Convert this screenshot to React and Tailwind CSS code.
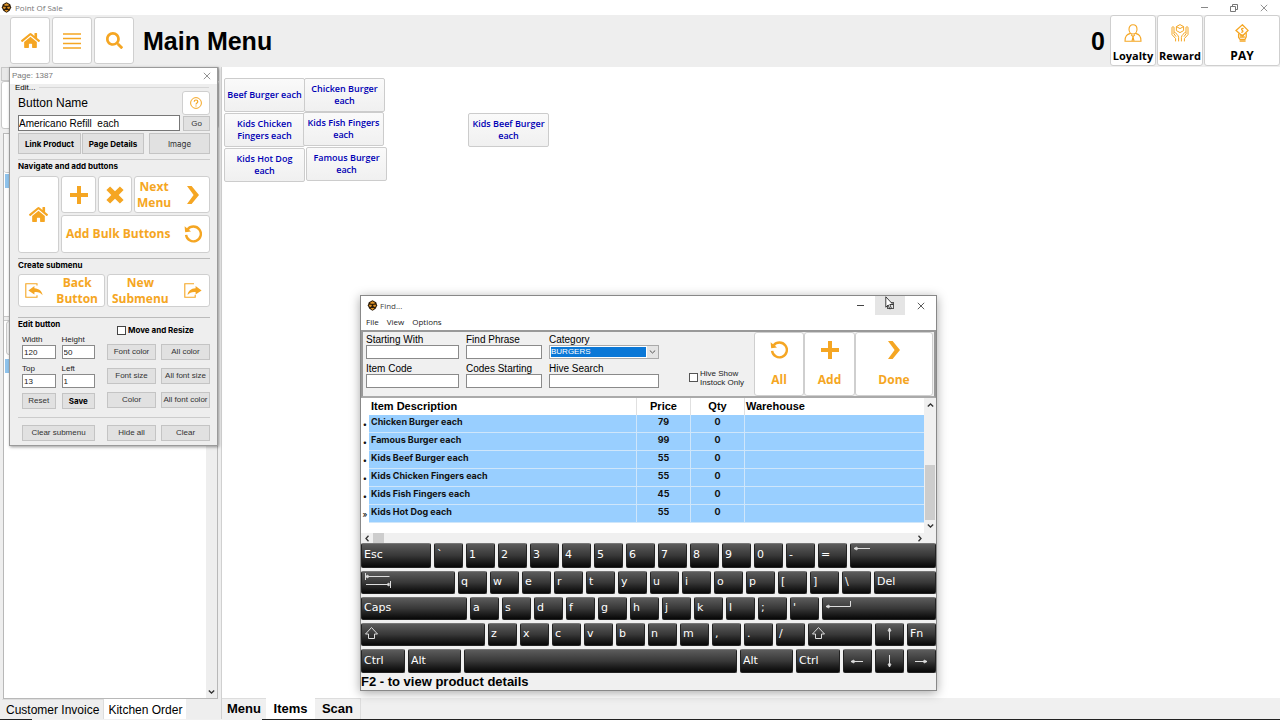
import { FaHome, FaSearch } from "react-icons/fa";

const flat = "border border-[#c4c4c4] bg-[#e1e1e1] text-[#333] text-[8px] leading-[10px] flex items-center justify-center whitespace-nowrap";
const tileBase = "border border-[#cfcfcf] rounded-[3px] bg-white text-[#f5a623] flex items-center";
const tile = `${tileBase} justify-center`;
const box = "block min-w-0 w-full h-[14px] border border-[#8a8a8a] bg-white px-px text-[8px] leading-[10px] text-[#222]";

function BeeIcon() {
  return (
    <svg viewBox="0 0 12 12" className="size-[11px] shrink-0" aria-hidden="true">
      <path d="M6 .3 10 2.4 11.2 6 9.4 9.6 6 11.8 2.6 9.6.8 6 2 2.4z" fill="#2a1a08" />
      <path d="M3 3.2 6 1.4 9 3.2 7.6 4.2H4.4zM1.8 5.2h3l.6 1.4-2.2 1.2zM10.2 5.2h-3l-.6 1.4 2.2 1.2zM3.8 8.6h4.4L6 10.8z" fill="#e0962a" />
    </svg>
  );
}

function Cross({ className }) {
  return (
    <svg viewBox="0 0 10 10" className={className} fill="none" stroke="currentColor" strokeWidth="1" aria-hidden="true">
      <path d="M1 1l8 8M9 1L1 9" />
    </svg>
  );
}

function Plus() {
  return (
    <svg viewBox="0 0 18 18" className="size-[18px]" fill="currentColor" aria-hidden="true">
      <path d="M7 0h4v7h7v4h-7v7H7v-7H0V7h7z" />
    </svg>
  );
}

function Times() {
  return (
    <svg viewBox="0 0 18 18" className="size-[18px]" fill="currentColor" aria-hidden="true">
      <path d="M4.1.4 9 5.3 13.9.4l3.7 3.7L12.7 9l4.9 4.9-3.7 3.7L9 12.7l-4.9 4.9L.4 13.9 5.3 9 .4 4.1z" />
    </svg>
  );
}

function Chevron() {
  return (
    <svg viewBox="0 0 12 18" className="h-[18px] w-[12px] shrink-0" fill="currentColor" aria-hidden="true">
      <path d="M0 0h4.6L12 9l-7.4 9H0l6.6-9z" />
    </svg>
  );
}

function Undo() {
  return (
    <svg viewBox="0 0 18 18" className="size-[18px] shrink-0" aria-hidden="true">
      <path d="M3.6 4.4A7.4 7.4 0 1 1 2.1 9.8" fill="none" stroke="currentColor" strokeWidth="2.4" />
      <path d="M.6 1.2 1.2 7.2 7 6.4z" fill="currentColor" />
    </svg>
  );
}

function PageArrow({ out }) {
  return (
    <svg viewBox="0 0 18 15" className="h-[15px] w-[18px] shrink-0" aria-hidden="true">
      {out ? (
        <>
          <path d="M10 .8H.8v13.4h10.4v-2.4" fill="none" stroke="currentColor" strokeWidth="1.1" />
          <path d="M11.6 3 17.6 7.4 11.6 11.4V9C8 8.6 5.6 9.6 3.6 12 4 8 7 5.4 11.6 5.2z" fill="currentColor" />
        </>
      ) : (
        <>
          <path d="M12 2.6V.8H.8v13.4H12v-2" fill="none" stroke="currentColor" strokeWidth="1.1" />
          <path d="M9.4 3 3.4 7.4l6 4V9.2c3.6-.4 6 .4 8.2 3C17 8.2 14 5.6 9.4 5.3z" fill="currentColor" />
        </>
      )}
    </svg>
  );
}

function HomeTile({ className }) {
  return (
    <button aria-label="Home" className={`${tile} ${className}`}>
      <FaHome className="size-[19px]" />
    </button>
  );
}

function TitleBar() {
  return (
    <header className="flex h-[15px] shrink-0 items-center bg-white pl-px text-[#777]">
      <BeeIcon />
      <span className="pl-[3px] font-['Open_Sans',sans-serif] text-[8px] leading-[12px]">Point Of Sale</span>
      <div className="ml-auto flex items-center gap-[22px] pr-3">
        <button aria-label="Minimize" className="h-px w-[7px] bg-[#888]" />
        <button aria-label="Restore">
          <svg viewBox="0 0 8 8" className="size-2" fill="none" stroke="#777" strokeWidth="1" aria-hidden="true">
            <path d="M.5 2.5h5v5h-5zM2.5 2.5v-2h5v5h-2" />
          </svg>
        </button>
        <button aria-label="Close">
          <Cross className="size-2" />
        </button>
      </div>
    </header>
  );
}

function HeaderAction({ label, children, className }) {
  return (
    <button className={`flex flex-col items-center justify-between rounded-[3px] border border-[#cfcfcf] bg-white pt-2 pb-[2px] ${className}`}>
      {children}
      <span className="font-['Open_Sans',sans-serif] font-bold text-black">{label}</span>
    </button>
  );
}

function TopBar() {
  return (
    <div className="flex h-[52px] shrink-0 bg-[#eee] pl-[10px]">
      <div className="flex gap-[2px] pt-[2px] pb-[3px]">
        <HomeTile className="w-10" />
        <button aria-label="List" className={`${tile} w-10`}>
          <svg viewBox="0 0 18 16" className="h-4 w-[18px]" stroke="currentColor" strokeWidth="1.3" aria-hidden="true">
            <path d="M0 1h18M0 5.5h18M0 10.5h18M0 15h18" />
          </svg>
        </button>
        <button aria-label="Search" className={`${tile} w-10`}>
          <FaSearch className="size-[17px]" />
        </button>
      </div>
      <h1 className="self-center pl-[9px] text-[25px] leading-[28px] font-bold">Main Menu</h1>
      <span className="ml-auto self-center pr-[5px] text-[25px] leading-[28px] font-bold">0</span>
      <div className="flex gap-px pb-px">
        <HeaderAction label="Loyalty" className="w-[46px] text-[11px] leading-[14px]">
          <svg viewBox="0 0 18 18" className="size-[18px]" fill="none" stroke="#f5a623" strokeWidth="1.1" aria-hidden="true">
            <path d="M9 .8c2.600 0 4 1.800 4 4.400S11.400 10 9 10 5 7.800 5 5.200 6.400.8 9 .8zM6.400 9.400C3 10.400 1 11.600 1 17.200h16c0-5.600-2-6.800-5.400-7.800M7 10.600l2 2 2-2M8 17l1-4.400 1 4.400" />
          </svg>
        </HeaderAction>
        <HeaderAction label="Reward" className="w-[46px] text-[11px] leading-[14px]">
          <svg viewBox="0 0 18 18" className="size-[18px]" fill="none" stroke="#f5a623" strokeWidth="1" aria-hidden="true">
            <path d="M9 .6l3.600 2v4L9 8.600l-3.600-2v-4zM5.400 2.600 9 4.600l3.600-2M7.600 17.400v-4c0-2-3-4.600-3.800-5-1-.4-1.400.6-.8 1.400l2 2.800M3 8.400V3.600c0-1.200-2-1.200-2 0v7l3.600 4v2.800M10.400 17.400v-4c0-2 3-4.600 3.800-5 1-.4 1.400.6.800 1.400l-2 2.800M15 8.400V3.600c0-1.200 2-1.200 2 0v7l-3.600 4v2.800" />
          </svg>
        </HeaderAction>
        <HeaderAction label="PAY" className="w-[76px] text-[12px] leading-[14px]">
          <svg viewBox="0 0 18 18" className="size-[18px]" fill="none" stroke="#f5a623" strokeWidth="1.3" aria-hidden="true">
            <path d="M9.4.8 15 6.4 9.4 12 3 6.4zM10.6 4.600C9 3.800 8 5.200 9.200 6.200s.6 2.600-1 1.800" />
            <path d="M5.6 9.4v4l1.400 2h5l1.200-2.600V9M6.800 11.200h4M6.800 13h5M6.600 17h6" />
          </svg>
        </HeaderAction>
      </div>
    </div>
  );
}

function Sidebar() {
  return (
    <aside className="flex w-[222px] shrink-0 flex-col border-r border-[#d0d0d0] bg-[#eee]">
      <div className="mr-[2px] ml-px h-[14px] border border-[#c8c8c8] bg-[#e8e8e8]" />
      <div className="mr-[2px] ml-px h-12 rounded-[3px] border border-[#c8c8c8] bg-white" />
      <div className="mx-[3px] mt-1 flex flex-1 flex-col border border-[#b8b8b8] bg-white">
        <div className="h-[39px] rounded-[3px] border-b border-[#c8c8c8] bg-[#f6f6f6]" />
        <div className="ml-px mt-px h-[14px] bg-[#8fc3ec]" />
        <div className="mt-32 h-[5px] border-y border-[#c8c8c8] bg-[#eee]" />
        <div className="ml-0.5 h-[34px] rounded-[3px] border border-[#c8c8c8] bg-[#f2f2f2]" />
        <div className="ml-px mt-1 h-[14px] bg-[#8fc3ec]" />
        <div className="flex flex-1 flex-col items-center justify-end self-end bg-[#eee] px-[2px] pb-1">
          <svg viewBox="0 0 7 4" className="h-1 w-[7px]" fill="none" stroke="#333" strokeWidth="1.3" aria-hidden="true">
            <path d="M.8.5l2.7 2.5L6.2.5" />
          </svg>
        </div>
      </div>
      <nav className="flex h-5 items-center pl-[2px] text-[12px] leading-[16px]">
        <button className="h-full border-t border-r border-[#ddd] px-1">Customer Invoice</button>
        <button className="h-full bg-white px-1 pt-[2px]">Kitchen Order</button>
      </nav>
    </aside>
  );
}

const canvasItems = [
  { label: "Beef Burger each", pos: "left-[2px] top-[11px]" },
  { label: "Chicken Burger each", pos: "left-[82px] top-[11px]" },
  { label: "Kids Chicken Fingers each", pos: "left-[2px] top-[46px]" },
  { label: "Kids Fish Fingers each", pos: "left-[81px] top-[45px]" },
  { label: "Kids Hot Dog each", pos: "left-[2px] top-[81px]" },
  { label: "Famous Burger each", pos: "left-[84px] top-[80px]" },
  { label: "Kids Beef Burger each", pos: "left-[246px] top-[46px]" },
];

function MenuArea() {
  return (
    <main className="flex min-w-0 flex-1 flex-col">
      <div className="relative flex-1 bg-white">
        {canvasItems.map((it) => (
          <button
            key={it.label}
            className={`absolute h-[34px] w-[81px] rounded-[2px] border border-[#ccc] bg-linear-to-b from-[#fafafa] to-[#f0f0f0] px-[2px] pb-px font-['Open_Sans',sans-serif] text-[9px] leading-[12px] font-semibold text-[#0000b4] ${it.pos}`}
          >
            {it.label}
          </button>
        ))}
      </div>
      <nav className="flex h-[21px] items-center bg-[#f0f0f0] text-[13px] leading-[18px] font-bold">
        <button className="h-full w-11 border-t border-[#ddd]">Menu</button>
        <button className="h-full w-[49px] bg-white pt-px">Items</button>
        <button className="h-full w-[46px] border-t border-r border-[#ddd]">Scan</button>
      </nav>
    </main>
  );
}

function Field({ id, label, value }) {
  return (
    <div className="flex flex-col">
      <label htmlFor={id} className="h-[10px] text-[8px] leading-[10px] text-[#222]">{label}</label>
      <input id={id} defaultValue={value} className={box} />
    </div>
  );
}

function SectionTitle({ children }) {
  return <h2 className="font-['Inter',sans-serif] text-[8px] leading-[12px] font-bold">{children}</h2>;
}

function PageWindow() {
  const big = `${tileBase} justify-between font-['Open_Sans',sans-serif] text-[12px] leading-[16px] font-bold`;
  return (
    <section aria-label="Page editor" className="absolute top-[67px] left-[9px] w-[209px] border border-[#9a9a9a] bg-[#eee] pb-1 shadow-[1px_1px_3px_rgba(0,0,0,0.4)]">
      <div className="flex h-4 items-center bg-white px-[2px] text-[#777]">
        <span className="text-[8px] leading-[12px]">Page: 1387</span>
        <button aria-label="Close" className="mr-1 ml-auto">
          <Cross className="size-2" />
        </button>
      </div>
      <div className="flex h-[7px] items-center pr-2 pl-[5px] text-[8px] leading-[7px]">
        <span className="pr-1">Edit...</span>
        <span className="h-px flex-1 bg-[#d6d6d6]" />
      </div>
      <div className="pr-[7px] pl-2">
        <div className="flex h-6 items-center justify-between">
          <label htmlFor="button-name" className="text-[12px] leading-[16px]">Button Name</label>
          <button aria-label="Help" className={`${tile} h-6 w-7`}>
            <svg viewBox="0 0 12 12" className="size-3" fill="none" stroke="currentColor" strokeWidth="1" aria-hidden="true">
              <circle cx="6" cy="6" r="5.4" />
              <path d="M4.2 4.800c0-2.400 3.600-2.400 3.600 0C7.800 6 6 6 6 7.400M6 8.400v1.200" strokeWidth="1.2" />
            </svg>
          </button>
        </div>
        <div className="flex gap-[3px]">
          <input id="button-name" defaultValue="Americano Refill  each" className="h-4 min-w-0 flex-1 border border-[#777] bg-white text-[10px] leading-[12px]" />
          <button className={`${flat} mt-px h-[15px] w-[27px]`}>Go</button>
        </div>
        <div className="mt-[2px] flex gap-px font-['Inter',sans-serif]">
          <button className={`${flat} h-[21px] w-[63px] font-bold text-black`}>Link Product</button>
          <button className={`${flat} h-[21px] w-[62px] font-bold text-black`}>Page Details</button>
          <button className={`${flat} ml-1 h-[21px] flex-1`}>Image</button>
        </div>
        <hr className="mt-[5px] border-[#ccc]" />
        <SectionTitle>Navigate and add buttons</SectionTitle>
        <div className="mt-1 flex gap-[2px]">
          <HomeTile className="w-[41px]" />
          <div className="flex flex-1 flex-col gap-[2px]">
            <div className="flex gap-[2px]">
              <button aria-label="Add" className={`${tile} h-[37px] w-[35px]`}><Plus /></button>
              <button aria-label="Remove" className={`${tile} h-[37px] w-[34px]`}><Times /></button>
              <button className={`${big} h-[37px] flex-1 pr-[10px] pl-[2px]`}>
                <span>Next<br />Menu</span>
                <Chevron />
              </button>
            </div>
            <button className={`${big} h-[38px] pr-[7px] pl-1`}>
              <span>Add Bulk Buttons</span>
              <Undo />
            </button>
          </div>
        </div>
        <hr className="mt-[5px] border-[#bbb]" />
        <SectionTitle>Create submenu</SectionTitle>
        <div className="mt-[3px] flex gap-[2px]">
          <button className={`${big} h-[33px] w-[87px] px-[6px]`}>
            <PageArrow />
            <span>Back<br />Button</span>
          </button>
          <button className={`${big} h-[33px] flex-1 pr-[7px] pl-1`}>
            <span>New<br />Submenu</span>
            <PageArrow out />
          </button>
        </div>
        <hr className="mt-[10px] border-[#bbb]" />
        <div className="flex justify-between">
          <div className="w-[77px]">
            <SectionTitle>Edit button</SectionTitle>
            <div className="mt-[5px] ml-1 grid grid-cols-2 gap-x-[6px] gap-y-[5px]">
              <Field id="w" label="Width" value="120" />
              <Field id="h" label="Height" value="50" />
              <Field id="t" label="Top" value="13" />
              <Field id="l" label="Left" value="1" />
              <button className={`${flat} h-4`}>Reset</button>
              <button className={`${flat} h-4 font-['Inter',sans-serif] font-bold text-black`}>Save</button>
            </div>
          </div>
          <div className="w-[103px] pt-[7px]">
            <label className="ml-[10px] flex h-[10px] items-center gap-[2px] font-['Inter',sans-serif] text-[8px] leading-[10px] font-bold whitespace-nowrap">
              <input type="checkbox" className="size-[9px] shrink-0 appearance-none border border-[#444] bg-white" />
              Move and Resize
            </label>
            <div className="mt-[9px] grid grid-cols-2 gap-x-[5px] gap-y-2">
              {["Font color", "All color", "Font size", "All font size", "Color", "All font color"].map((t) => (
                <button key={t} className={`${flat} h-4`}>{t}</button>
              ))}
            </div>
          </div>
        </div>
        <hr className="mt-2 border-[#ccc]" />
        <div className="mt-[7px] ml-1 flex gap-[5px]">
          <button className={`${flat} mr-[7px] h-4 w-[73px]`}>Clear submenu</button>
          <button className={`${flat} h-4 w-[49px]`}>Hide all</button>
          <button className={`${flat} h-4 flex-1`}>Clear</button>
        </div>
      </div>
    </section>
  );
}

const rows = [
  ["Chicken Burger each", 79, 0],
  ["Famous Burger each", 99, 0],
  ["Kids Beef Burger each", 55, 0],
  ["Kids Chicken Fingers each", 55, 0],
  ["Kids Fish Fingers each", 45, 0],
  ["Kids Hot Dog each", 55, 0],
];

function Search({ id, label }) {
  return (
    <div>
      <label htmlFor={id} className="block h-[11px] text-[10px] leading-[12px] whitespace-nowrap">{label}</label>
      <input id={id} className={box} />
    </div>
  );
}

function Key({ k }) {
  const [label, width] = Array.isArray(k) ? k : [k, "w-[29px]"];
  const shapes = {
    Tab: <path d="M1.5 1v7M1.5 4.500h24M26.500 9v7M25 12.500H2M1.500 4.500l2.500-1.500v3zM26.500 12.500l-2.500-1.500v3z" />,
    Shift: <path d="M7.5 3.500 13.500 10H10.500v4.500h-6V10H1.500z" />,
    Enter: <path d="M25.5 3v5.500H1M1 8.500l3-1.500v3z" />,
    Backspace: <path d="M1 3.500h16M1 3.500l3-1.500v3z" />,
    Left: <path d="M1 9.500h12M1 9.500l3-1.500v3z" />,
    Right: <path d="M1 9.500h12M13 9.500l-3-1.500v3z" />,
    Up: <path d="M7.5 3v12M7.5 3 6 6h3z" />,
    Down: <path d="M7.5 3v12M7.5 15 6 12h3z" />,
  };
  const arrow = ["Left", "Right", "Up", "Down"].includes(label);
  return (
    <button
      aria-label={label === " " ? "Space" : label}
      className={`flex h-full items-center overflow-hidden rounded-[2px] border border-[#222] border-t-[#777] bg-linear-to-b from-[#5c5c5c] via-[#383838] to-[#080808] pb-px pl-[2px] font-['DejaVu_Sans',sans-serif] text-[11px] leading-[14px] text-white ${width}`}
    >
      {shapes[label] ? (
        <svg viewBox={arrow ? "0 0 14 18" : "0 0 28 18"} className={arrow ? "ml-1 h-[18px] w-[14px]" : "mb-[2px] h-[18px] w-7"} fill="none" stroke="#ddd" strokeWidth="1" aria-hidden="true">
          {shapes[label]}
        </svg>
      ) : (
        label
      )}
    </button>
  );
}

const keyboard = [
  { h: "h-[25px]", keys: [["Esc", "w-[70px]"], "`", ..."1234567890-=", ["Backspace", "flex-1"]] },
  { h: "h-[23px]", keys: [["Tab", "w-[94px]"], ..."qwertyuiop[]\\", ["Del", "flex-1"]] },
  { h: "h-[23px]", keys: [["Caps", "w-[106px]"], ..."asdfghjkl;'", ["Enter", "flex-1"]] },
  { h: "h-[23px]", keys: [["Shift", "w-[124px]"], ..."zxcvbnm,./", ["Shift", "flex-1"], "Up", "Fn"] },
  { h: "h-6", keys: [["Ctrl", "w-11"], ["Alt", "w-[53px]"], [" ", "flex-1"], ["Alt", "w-[53px]"], ["Ctrl", "w-11"], "Left", "Down", "Right"] },
];

function FindWindow() {
  const action = `${tile} flex-col gap-[13px] font-['Open_Sans',sans-serif] text-[12px] leading-[16px] font-bold`;
  const head = "border-r border-[#e0e0e0] text-[11px] leading-[17px] font-bold";
  const cell = "border-r border-b border-[#cfe6fa] bg-[#99cfff]";
  return (
    <section aria-label="Find" className="absolute top-[295px] left-[360px] w-[577px] border border-[#888] bg-[#f0f0f0] shadow-[0_2px_10px_rgba(0,0,0,0.35)]">
      <div className="relative flex h-[19px] items-center bg-white pl-[6px] font-['Open_Sans',sans-serif]">
        <BeeIcon />
        <span className="pl-[2px] text-[8px] leading-[12px] text-[#444]">Find...</span>
        <div className="ml-auto flex h-full items-center text-[#333]">
          <button aria-label="Minimize" className="flex h-full w-[30px] items-center justify-center"><span className="h-px w-[7px] bg-[#444]" /></button>
          <button aria-label="Maximize" className="flex h-full w-[30px] items-center justify-center bg-[#e5e5e5]">
            <span className="size-[7px] border border-[#555]" />
          </button>
          <button aria-label="Close" className="flex h-full w-[31px] items-center justify-center"><Cross className="size-2" /></button>
        </div>
        <svg viewBox="0 0 9 14" className="absolute top-0 right-[42px] h-[14px] w-[9px]" fill="#fff" stroke="#111" strokeWidth=".8" aria-hidden="true">
          <path d="M.8.8v10.400l2.400-2.200 1.600 4 1.600-.7-1.600-3.800h3.200z" />
        </svg>
      </div>
      <nav className="flex h-[15px] items-center gap-2 bg-white pb-px pl-[5px] font-['Open_Sans',sans-serif] text-[8px] leading-[12px] text-[#222]">
        <button>File</button>
        <button>View</button>
        <button>Options</button>
      </nav>
      <div className="flex h-[68px] border-2 border-t-[#999] border-r-[#999] border-b-[#aaa] border-l-[#999] pr-px pl-[3px]">
        <div className="grid flex-1 grid-cols-[93px_76px_110px_1fr] content-start gap-x-[7px] gap-y-1 pt-[2px]">
          <Search id="sw" label="Starting With" />
          <Search id="fp" label="Find Phrase" />
          <div className="col-span-2 w-[110px]">
            <label htmlFor="cat" className="block h-[11px] text-[10px] leading-[12px]">Category</label>
            <div className="relative border border-[#aaa] bg-[#e4e4e4]">
              <select id="cat" className="block h-3 w-[97px] appearance-none border border-white bg-[#0b78d7] text-[8px] leading-[10px] text-white">
                <option>BURGERS</option>
              </select>
              <svg viewBox="0 0 7 4" className="pointer-events-none absolute top-1 right-[2px] h-1 w-[7px]" fill="none" stroke="#555" strokeWidth="1" aria-hidden="true">
                <path d="M.8.5l2.7 2.5L6.2.5" />
              </svg>
            </div>
          </div>
          <Search id="ic" label="Item Code" />
          <Search id="cs" label="Codes Starting" />
          <Search id="hs" label="Hive Search" />
          <label className="ml-[23px] flex items-center gap-[2px] pt-1 text-[8px] leading-[9px] whitespace-nowrap text-[#222]">
            <input type="checkbox" className="size-[9px] shrink-0 appearance-none border border-[#555] bg-white" />
            <span>Hive Show<br />Instock Only</span>
          </label>
        </div>
        <button className={`${action} w-[50px]`}><Undo />All</button>
        <button className={`${action} w-[51px]`}><Plus />Add</button>
        <button className={`${action} w-[78px]`}><Chevron />Done</button>
      </div>
      <div className="flex bg-white">
        <div className="min-w-0 flex-1 pb-[10px]">
          <table className="w-full table-fixed border-separate border-spacing-0 text-left">
            <colgroup>
              <col className="w-2" />
              <col />
              <col className="w-[54px]" />
              <col className="w-[54px]" />
              <col className="w-[179px]" />
            </colgroup>
            <thead>
              <tr>
                <th aria-label="Marker" className="p-0" />
                <th className={`${head} p-0 pl-[2px]`}>Item Description</th>
                <th className={`${head} p-0 text-center`}>Price</th>
                <th className={`${head} p-0 text-center`}>Qty</th>
                <th className="p-0 pl-px text-[11px] leading-[17px] font-bold">Warehouse</th>
              </tr>
            </thead>
            <tbody className="font-['Inter',sans-serif] text-[9px] leading-[14px] font-bold text-[#111]">
              {rows.map(([name, price, qty], i) => (
                <tr key={name} className="h-[18px] align-top">
                  <td className="p-0 pt-[2px] text-center text-[8px] font-medium">{i === rows.length - 1 ? "»" : "•"}</td>
                  <td className={`${cell} p-0 pl-[2px]`}>{name}</td>
                  <td className={`${cell} p-0 text-center`}>{price}</td>
                  <td className={`${cell} p-0 text-center`}>{qty}</td>
                  <td className="border-b border-[#cfe6fa] bg-[#99cfff] p-0" />
                </tr>
              ))}
            </tbody>
          </table>
        </div>
        <div className="flex w-3 flex-col items-center bg-[#f0f0f0] py-[5px]">
          <svg viewBox="0 0 7 4" className="h-1 w-[7px]" fill="none" stroke="#333" strokeWidth="1.3" aria-hidden="true">
            <path d="M.8 3.5 3.5 1l2.7 2.5" />
          </svg>
          <span className="mt-auto mb-1 h-[55px] w-[10px] bg-[#cdcdcd]" />
          <svg viewBox="0 0 7 4" className="h-1 w-[7px]" fill="none" stroke="#333" strokeWidth="1.3" aria-hidden="true">
            <path d="M.8.5l2.7 2.5L6.2.5" />
          </svg>
        </div>
      </div>
      <div className="flex h-[10px] items-center pr-[14px] pl-1">
        <svg viewBox="0 0 4 7" className="h-[7px] w-1" fill="none" stroke="#333" strokeWidth="1.3" aria-hidden="true">
          <path d="M3.5.8 1 3.5l2.5 2.7" />
        </svg>
        <span className="ml-1 h-full w-[11px] bg-[#cdcdcd]" />
        <svg viewBox="0 0 4 7" className="ml-auto h-[7px] w-1" fill="none" stroke="#333" strokeWidth="1.3" aria-hidden="true">
          <path d="M.5.8 3 3.5.5 6.2" />
        </svg>
      </div>
      <div className="flex flex-col gap-[3px]">
        {keyboard.map((row, i) => (
          <div key={i} className={`flex gap-[3px] ${row.h}`}>
            {row.keys.map((k, j) => <Key key={j} k={k} />)}
          </div>
        ))}
      </div>
      <p className="h-[17px] text-[13px] leading-[17px] font-bold">F2 - to view product details</p>
    </section>
  );
}

export default function App() {
  return (
    <div className="relative flex h-screen flex-col overflow-hidden bg-[#f0f0f0] font-['Liberation_Sans',Arial,sans-serif] text-black">
      <TitleBar />
      <TopBar />
      <div className="flex min-h-0 flex-1">
        <Sidebar />
        <MenuArea />
      </div>
      <div className="flex h-px shrink-0 justify-between">
        <span className="w-8 bg-[#222]" />
        <span className="ml-[230px] flex-1 bg-[#222]" />
      </div>
      <PageWindow />
      <FindWindow />
    </div>
  );
}
